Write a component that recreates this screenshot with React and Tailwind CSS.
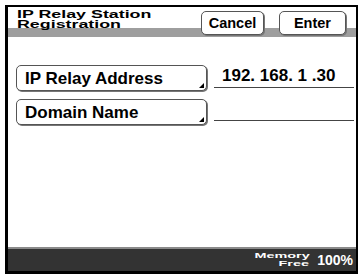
import React from "react";

const F = { fontFamily: '"Liberation Sans", Arial, sans-serif' };

function HeadBtn({ w, children }) {
  return (
    <div
      className={`${w} h-[24px] rounded-[5px] border border-[#555] bg-white shadow-[1px_1px_0_#777] flex items-center justify-center text-[14.5px] font-bold text-black leading-none`}
    >
      {children}
    </div>
  );
}

function ItemBtn({ children }) {
  return (
    <div className="relative w-[191px] h-[26px] rounded-[5px] border border-[#555] bg-white shadow-[1px_1px_0_#777] flex items-center pl-[8px] text-[17px] font-bold text-black leading-none">
      {children}
      <div className="absolute right-[2px] bottom-[2px] w-0 h-0 border-l-[5px] border-l-transparent border-b-[5px] border-b-black" />
    </div>
  );
}

export default function App() {
  return (
    <div className="w-[362px] h-[276px] bg-white pt-[5px] pl-[5px]" style={F}>
      <div className="w-[353px] h-[269px] border-l-[3px] border-t-[2px] border-r-[2px] border-b-[3px] border-black flex flex-col">
        <div className="h-[30px] flex items-start bg-[linear-gradient(to_bottom,white_21px,#9e9e9e_21px)]">
          <div className="pl-[9px] pt-[3px] font-bold text-[11.5px] leading-[9.5px] text-black">
            <div className="origin-left scale-x-[1.55] whitespace-nowrap">IP Relay Station</div>
            <div className="origin-left scale-x-[1.55] whitespace-nowrap">Registration</div>
          </div>
          <div className="ml-auto mt-[4px] mr-[10px] flex gap-[15px]">
            <HeadBtn w="w-[63px]">Cancel</HeadBtn>
            <HeadBtn w="w-[67px]">Enter</HeadBtn>
          </div>
        </div>
        <div className="flex-1 bg-white pt-[27px] pl-[8px] flex flex-col gap-[6px]">
          <div className="flex items-end">
            <ItemBtn>IP Relay Address</ItemBtn>
            <div className="ml-[7px] mb-[3px] w-[140px] h-[24px] border-b border-[#444] flex items-center pl-[8px] text-[17px] font-bold text-black leading-none">
              192. 168. 1 .30
            </div>
          </div>
          <div className="flex items-end">
            <ItemBtn>Domain Name</ItemBtn>
            <div className="ml-[7px] mb-[4px] w-[140px] h-[24px] border-b border-[#444]" />
          </div>
        </div>
        <div className="h-[24px] border-t-[2px] border-[#8a8a8a] bg-[#333] flex items-center justify-end pr-[3px] text-white font-bold">
          <div className="w-[57px] flex flex-col items-end text-[8px] leading-[8px]">
            <div className="origin-right scale-x-[1.8] whitespace-nowrap">Memory</div>
            <div className="origin-right scale-x-[1.8] whitespace-nowrap">Free</div>
          </div>
          <div className="ml-[8px] text-[14px] leading-none">100%</div>
        </div>
      </div>
    </div>
  );
}
